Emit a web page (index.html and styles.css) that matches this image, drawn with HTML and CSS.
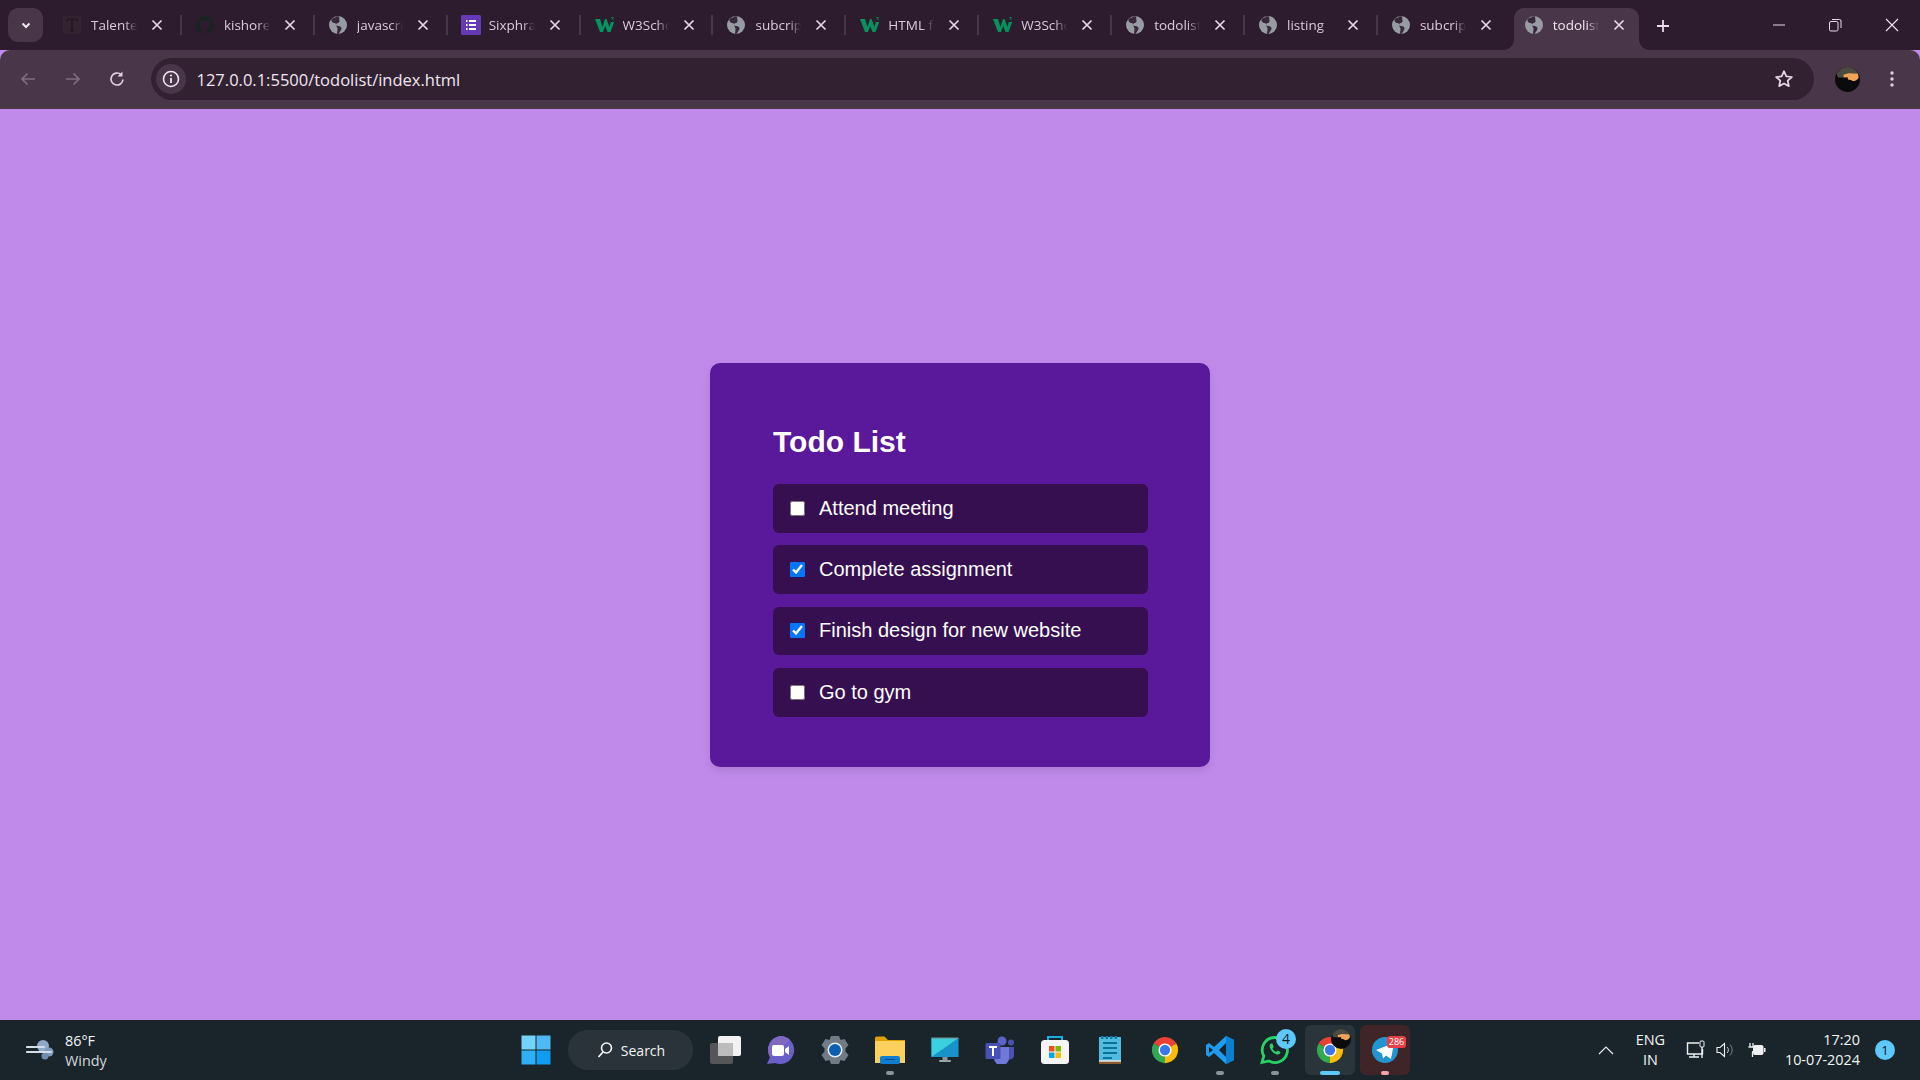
FILE: index.html
```html
<!DOCTYPE html>
<html lang="en">
<head>
<meta charset="utf-8">
<title>todolist</title>
<link rel="stylesheet" href="styles.css">
</head>
<body>
<svg class="defs" width="0" height="0" aria-hidden="true">
  <symbol id="globe" viewBox="0 0 16 16">
    <circle cx="8" cy="8" r="8" fill="#979ca3"/>
    <path d="M7 .3C5.600 1.600 3.700 2 2.200 2.600 1.800 4.500 3 6 4.800 6.300c1.300.2 1.700 1.200 1.700 2.200 0 1 .7 1.400 1 2.400.2.800-.1 2.300-.4 4.900l1.400.1c1-1.700 2.600-3.300 2.600-5 0-1.400-1.400-1.700-2.600-2-1-.2-2-.2-2.200-1.400-.1-.9 1.200-1.100 2-1.500.9-.4 1.300-1.300 1-2.100-.2-.8-.2-1.900-.3-3.400z" fill="#2d1c2e" opacity=".9"/>
  </symbol>
  <symbol id="x" viewBox="0 0 12 12">
    <path d="M1.500 1.500l9 9M10.500 1.500l-9 9" stroke="#e6d6e6" stroke-width="1.700" fill="none"/>
  </symbol>
  <symbol id="w3" viewBox="0 0 20 16">
    <path d="M0 2h5l2.500 8L10 2h1.500l3 8 1.300-5h3.400L15.500 15h-3l-2.300-6-2.200 6H5z" fill="#05925f"/>
    <path d="M16.200 .5h2.300L17 2c1 0 1.500.4 1.500 1.100" stroke="#05925f" stroke-width=".7" fill="none"/>
  </symbol>
  <symbol id="chrome" viewBox="0 0 32 32">
    <path d="M16 16L3.880 9A14 14 0 0 1 28.120 9z" fill="#ea4335"/>
    <path d="M16 16L3.880 9A14 14 0 0 0 16 30z" fill="#34a853"/>
    <path d="M16 16L28.120 9A14 14 0 0 1 16 30z" fill="#fbbc04"/>
    <circle cx="16" cy="16" r="7" fill="#fff"/>
    <circle cx="16" cy="16" r="5.500" fill="#3b78e7"/>
  </symbol>
  <symbol id="face" viewBox="0 0 24 24">
    <circle cx="12" cy="12" r="12" fill="#0c0b0b"/>
    <path d="M1.500 7C3.500 3 7 0 12 0s8.500 3 10.500 7l-1.500 3H3z" fill="#4d4b40"/>
    <path d="M8 7.500l5-1.500 9 .5.800 3.500c-1.500 2.500-3 3.500-6 3.500-1-1.500-3-1-4.300-1.500L12 9.500 8.500 10z" fill="#f2a35a"/>
  </symbol>
</svg>

<header class="chrome">
  <div class="tabstrip">
    <button class="tab-search"><svg width="12" height="12" viewBox="0 0 12 12"><path d="M2.500 4.500L6 8l3.500-3.500" stroke="#f0e6f0" stroke-width="2" fill="none"/></svg></button>
    <div class="tabs">
      <div class="tab"><svg class="fav" viewBox="0 0 16 16"><rect width="16" height="16" fill="#33222f"/><path d="M3.500 3h9v2M8 3v10M6 13h4M3.500 3v2" stroke="#241722" stroke-width="1.500" fill="none"/></svg><span class="title">Talented</span><svg class="close"><use href="#x"/></svg></div><i class="sep"></i>
      <div class="tab"><svg class="fav" viewBox="0 0 16 16"><path d="M8 0a8 8 0 0 0-2.500 15.600c.4.100.5-.2.500-.4v-1.400c-2.200.5-2.700-1-2.700-1-.4-.9-.9-1.200-.9-1.200-.7-.5.100-.5.100-.5.800.100 1.200.8 1.200.8.700 1.200 1.900.9 2.300.7.100-.5.300-.9.500-1.100-1.800-.2-3.700-.9-3.700-4 0-.9.300-1.600.8-2.100-.1-.2-.4-1 .1-2.100 0 0 .7-.2 2.200.8a7.600 7.600 0 0 1 4 0c1.500-1 2.200-.8 2.200-.8.400 1.100.2 1.900.1 2.100.5.600.8 1.300.8 2.100 0 3.100-1.900 3.800-3.700 4 .3.300.6.800.6 1.500v2.200c0 .2.100.5.600.4A8 8 0 0 0 8 0z" fill="#16261f"/></svg><span class="title">kishore</span><svg class="close"><use href="#x"/></svg></div><i class="sep"></i>
      <div class="tab"><svg class="fav"><use href="#globe"/></svg><span class="title">javascript</span><svg class="close"><use href="#x"/></svg></div><i class="sep"></i>
      <div class="tab"><svg class="fav fav-lg" viewBox="0 0 20 20"><rect width="20" height="20" rx="1.500" fill="#673ab7"/><path d="M5 6h1.500M8 6h7M5 10h1.500M8 10h7M5 14h1.500M8 14h7" stroke="#fff" stroke-width="1.800"/></svg><span class="title">Sixphrase</span><svg class="close"><use href="#x"/></svg></div><i class="sep"></i>
      <div class="tab"><svg class="fav fav-w"><use href="#w3"/></svg><span class="title">W3Schools</span><svg class="close"><use href="#x"/></svg></div><i class="sep"></i>
      <div class="tab"><svg class="fav"><use href="#globe"/></svg><span class="title">subcription</span><svg class="close"><use href="#x"/></svg></div><i class="sep"></i>
      <div class="tab"><svg class="fav fav-w"><use href="#w3"/></svg><span class="title">HTML for</span><svg class="close"><use href="#x"/></svg></div><i class="sep"></i>
      <div class="tab"><svg class="fav fav-w"><use href="#w3"/></svg><span class="title">W3Schools</span><svg class="close"><use href="#x"/></svg></div><i class="sep"></i>
      <div class="tab"><svg class="fav"><use href="#globe"/></svg><span class="title">todolist</span><svg class="close"><use href="#x"/></svg></div><i class="sep"></i>
      <div class="tab"><svg class="fav"><use href="#globe"/></svg><span class="title">listing</span><svg class="close"><use href="#x"/></svg></div><i class="sep"></i>
      <div class="tab"><svg class="fav"><use href="#globe"/></svg><span class="title">subcription</span><svg class="close"><use href="#x"/></svg></div><i class="sep sep-clear"></i>
      <div class="tab active"><svg class="fav"><use href="#globe"/></svg><span class="title">todolist</span><svg class="close"><use href="#x"/></svg></div>
    </div>
    <button class="new-tab"><svg width="16" height="16" viewBox="0 0 16 16"><path d="M8 2v12M2 8h12" stroke="#eadcea" stroke-width="1.800"/></svg></button>
    <div class="win-controls">
      <span class="win"><svg width="14" height="14" viewBox="0 0 14 14"><path d="M1 7h12" stroke="#e8dce8"/></svg></span>
      <span class="win"><svg width="14" height="14" viewBox="0 0 14 14"><rect x="1.500" y="3.500" width="8.500" height="9.500" rx="1.500" stroke="#e8dce8" fill="none"/><path d="M4 1.500h7.500a1.500 1.500 0 0 1 1.500 1.500v7" stroke="#e8dce8" fill="none"/></svg></span>
      <span class="win"><svg width="16" height="16" viewBox="0 0 16 16"><path d="M2 2l12 12M14 2L2 14" stroke="#f0e6f0" stroke-width="1.100"/></svg></span>
    </div>
  </div>
  <div class="toolbar">
    <span class="nav"><svg width="18" height="18" viewBox="0 0 18 18"><path d="M16 9H3M8.500 3.500L3 9l5.500 5.500" stroke="#7f6e7f" stroke-width="1.700" fill="none"/></svg></span>
    <span class="nav"><svg width="18" height="18" viewBox="0 0 18 18"><path d="M2 9h13M9.500 3.500L15 9l-5.500 5.500" stroke="#7f6e7f" stroke-width="1.700" fill="none"/></svg></span>
    <span class="nav"><svg width="18" height="18" viewBox="0 0 18 18"><path d="M15 9.500A6 6 0 1 1 13 4.500" stroke="#e0d0e0" stroke-width="1.700" fill="none"/><path d="M14.500 1.500v5h-5z" fill="#e0d0e0"/></svg></span>
    <div class="omnibox">
      <span class="site-info"><svg width="18" height="18" viewBox="0 0 18 18"><circle cx="9" cy="9" r="7.500" stroke="#f0e6f0" stroke-width="1.600" fill="none"/><path d="M9 8v5" stroke="#f0e6f0" stroke-width="1.800"/><circle cx="9" cy="5.500" r="1.100" fill="#f0e6f0"/></svg></span>
      <span class="url">127.0.0.1:5500/todolist/index.html</span>
      <svg class="star" width="20" height="20" viewBox="0 0 20 20"><path d="M10 2.200l2.300 5.200 5.600.6-4.200 3.700 1.200 5.500L10 14.400l-4.900 2.800 1.200-5.500L2.100 8l5.600-.6z" stroke="#e6d6e6" stroke-width="1.700" fill="none" stroke-linejoin="round"/></svg>
    </div>
    <span class="nav avatar"><svg width="25" height="25"><use href="#face"/></svg></span>
    <span class="nav"><svg width="18" height="18" viewBox="0 0 18 18"><circle cx="9" cy="3" r="1.700" fill="#e0d0e0"/><circle cx="9" cy="9" r="1.700" fill="#e0d0e0"/><circle cx="9" cy="15" r="1.700" fill="#e0d0e0"/></svg></span>
  </div>
</header>

<main class="page">
  <section class="card">
    <h1 class="card-title">Todo List</h1>
    <ul class="todo">
      <li class="item"><input type="checkbox" id="t1"><label for="t1">Attend meeting</label></li>
      <li class="item"><input type="checkbox" id="t2" checked><label for="t2">Complete assignment</label></li>
      <li class="item"><input type="checkbox" id="t3" checked><label for="t3">Finish design for new website</label></li>
      <li class="item"><input type="checkbox" id="t4"><label for="t4">Go to gym</label></li>
    </ul>
  </section>
</main>

<footer class="taskbar">
  <div class="weather">
    <svg width="32" height="26" viewBox="0 0 32 26"><circle cx="17" cy="9" r="6" fill="#8fa9c9"/><circle cx="23" cy="15" r="4.500" fill="#7f9abd"/><circle cx="19" cy="19" r="3.500" fill="#6f8cb0"/><path d="M1 10h17M1 15h24" stroke="#d4dde8" stroke-width="2.200" stroke-linecap="round"/></svg>
    <div class="weather-text"><span>86°F</span><span class="weather-sub">Windy</span></div>
  </div>
  <div class="centre">
    <span class="slot">
      <svg width="30" height="30" viewBox="0 0 30 30"><rect x="0.500" y="0.500" width="14" height="14" fill="#74d3fb"/><rect x="15.500" y="0.500" width="14" height="14" fill="#4fb9f5"/><rect x="0.500" y="15.500" width="14" height="14" fill="#2fb0f5"/><rect x="15.500" y="15.500" width="14" height="14" fill="#129bf3"/></svg>
    </span>
    <div class="search"><svg width="18" height="18" viewBox="0 0 18 18"><circle cx="10.500" cy="7" r="5" stroke="#f4f6f7" stroke-width="1.600" fill="none"/><path d="M7 11l-4.500 5" stroke="#f4f6f7" stroke-width="1.800"/></svg><span>Search</span></div>
    <div class="apps">
      <span class="slot"><svg width="32" height="30" viewBox="0 0 32 30"><rect x="9" y="1" width="23" height="20" rx="2" fill="#f2f2f2"/><rect x="1" y="8" width="23" height="21" rx="2" fill="#5d5d5d" opacity=".88"/><rect x="9" y="8" width="15" height="13" fill="#bdbdbd"/></svg></span>
      <span class="slot"><svg width="30" height="30" viewBox="0 0 30 30"><path d="M15 1a14 14 0 1 1-5 27L2 29l3-7A14 14 0 0 1 15 1z" fill="#6a5fc9"/><path d="M15 1A14 14 0 0 0 5 22l20-17A14 14 0 0 0 15 1z" fill="#8068c0"/><rect x="7" y="10" width="12" height="11" rx="2" fill="#fff"/><path d="M20 14l4-3v9l-4-3z" fill="#fff"/></svg></span>
      <span class="slot"><svg width="32" height="30" viewBox="0 0 32 30"><path d="M12 1h8l1.500 4 4-1 4 6-3 3.500v3l3 3.500-4 6-4-1L20 29h-8l-1.500-4-4 1-4-6 3-3.500v-3L2.500 10l4-6 4 1z" fill="#717b85"/><circle cx="16" cy="15" r="7.500" fill="#e8eef3"/><circle cx="16" cy="15" r="6" fill="#0f5db0"/></svg></span>
      <span class="slot slot-open"><svg width="32" height="28" viewBox="0 0 32 28"><path d="M1 2a1.500 1.500 0 0 1 1.500-1.500h8L14 4h17v8H1z" fill="#e0a100"/><path d="M1 5h30v22H1z" fill="#fcd05c"/><rect x="6" y="20" width="20" height="8" rx="2" fill="#0f7fd6"/><path d="M11 23.500h10" stroke="#064a8c"/></svg></span>
      <span class="slot"><svg width="28" height="26" viewBox="0 0 28 26"><rect x="0.500" y="1" width="27" height="19" fill="#1992c9"/><path d="M.5 1h27L.5 20z" fill="#39d0e0"/><rect x="0.500" y="0.500" width="27" height="1.200" fill="#78909c"/><rect x="11.500" y="20" width="5" height="3" fill="#8a9399"/><rect x="8" y="23" width="12" height="2" rx="1" fill="#9aa3a9"/></svg></span>
      <span class="slot"><svg width="30" height="28" viewBox="0 0 30 28"><circle cx="17" cy="5" r="4.500" fill="#5d64c8"/><circle cx="26" cy="6.500" r="3" fill="#4a51b0"/><path d="M21 11h8v9a4.500 4.500 0 0 1-8 2z" fill="#4a51b0"/><path d="M9 11h15v11a7.500 7.500 0 0 1-15 0z" fill="#7179d8"/><rect x="0.500" y="7" width="15" height="16" rx="1.500" fill="#4750b5"/><path d="M4 11h8M8 11v9" stroke="#fff" stroke-width="2"/></svg></span>
      <span class="slot"><svg width="30" height="30" viewBox="0 0 30 30"><path d="M8 6V2h14v4" stroke="#17aee6" stroke-width="2" fill="none"/><rect x="1" y="5" width="28" height="24" rx="3.500" fill="#f5f5f5"/><rect x="9" y="11" width="5.500" height="5.500" fill="#f25022"/><rect x="15.500" y="11" width="5.500" height="5.500" fill="#7fba00"/><rect x="9" y="17.500" width="5.500" height="5.500" fill="#00a4ef"/><rect x="15.500" y="17.500" width="5.500" height="5.500" fill="#ffb900"/></svg></span>
      <span class="slot"><svg width="24" height="30" viewBox="0 0 24 30"><rect x="1" y="2" width="22" height="26" fill="#51bce0"/><rect x="1" y="26" width="22" height="3" fill="#8a5a2e"/><path d="M1 26h22" stroke="#e8e8e8" stroke-width="1.500"/><path d="M3 2.500h18" stroke="#0e7ea6" stroke-width="3" stroke-dasharray="2.500 2"/><path d="M5 8h14M5 13h14M5 18h14M5 23h9" stroke="#0e6f99" stroke-width="2"/></svg></span>
      <span class="slot"><svg width="30" height="30"><use href="#chrome"/></svg></span>
      <span class="slot slot-open"><svg width="30" height="30" viewBox="0 0 30 30"><path d="M21 1l8 4v20l-8 4L9 18l-5 4-3-2v-10l3-2 5 4z" fill="#1f9cf0"/><path d="M21 1l8 4v20l-8 4z" fill="#0b7fcf"/><path d="M21 8l-7 7 7 7z" fill="#1a252b"/><path d="M4 12l4 3-4 3z" fill="#1a252b"/></svg></span>
      <span class="slot slot-open"><svg width="30" height="30" viewBox="0 0 30 30"><path d="M15 2.500a12.500 12.500 0 1 1-6 23.500L2 27.500l1.800-6.500A12.500 12.500 0 0 1 15 2.500z" stroke="#25d366" stroke-width="2.800" fill="none"/><path d="M11 8.500c-1.500 1-2 3-.5 5.500 1.500 3 4 5 6.500 5.500 2 .3 3.500-1 3.500-2.500l-3-1.500-1.500 1.500c-1.500-.8-3-2.300-3.500-3.500l1.200-1.500-1.300-3.500z" fill="#25d366"/></svg><b class="count count-blue">4</b></span>
      <span class="slot slot-active"><svg width="30" height="30"><use href="#chrome"/></svg><svg class="overlay-face" width="20" height="20"><use href="#face"/></svg></span>
      <span class="slot slot-alert"><svg width="28" height="28" viewBox="0 0 28 28"><circle cx="14" cy="14" r="13" fill="#2095cf"/><path d="M5 14l18-7-3 16-5-3.500-3 3-1-5z" fill="#fff"/></svg><b class="count count-red">286</b></span>
    </div>
  </div>
  <div class="tray">
    <svg class="tray-chev" width="16" height="10" viewBox="0 0 16 10"><path d="M1 9l7-7 7 7" stroke="#e8eaec" stroke-width="1.200" fill="none"/></svg>
    <div class="lang"><span>ENG</span><span>IN</span></div>
    <svg class="tray-i" width="20" height="20" viewBox="0 0 20 20"><path d="M13 3H1.500v11h15V9M3 17h10M8 14v3" stroke="#eef0f2" stroke-width="1.400" fill="none"/><rect x="14" y="1" width="4" height="6" rx="1" stroke="#eef0f2" fill="#1a252b"/><path d="M16 7v11" stroke="#eef0f2" stroke-width="1.400"/></svg>
    <svg class="tray-i" width="20" height="18" viewBox="0 0 20 18"><path d="M1 6.500v5h3l4.500 4V2.500L4 6.500z" stroke="#eef0f2" stroke-width="1.100" fill="none"/><path d="M11 6a4 4 0 0 1 0 6" stroke="#c8cbce" fill="none"/><path d="M14 3.500a8 8 0 0 1 0 11" stroke="#777c80" fill="none"/></svg>
    <svg class="tray-i" width="20" height="16" viewBox="0 0 20 16"><path d="M4 1v4M7 1v4M2.500 5h6v3l-2 2v5" stroke="#eef0f2" stroke-width="1.300" fill="none"/><rect x="7" y="3" width="10.500" height="10" rx="2" fill="#eef0f2"/><rect x="18" y="6" width="1.500" height="4" fill="#eef0f2"/></svg>
    <div class="clock"><span>17:20</span><span>10-07-2024</span></div>
    <b class="notif">1</b>
  </div>
</footer>
</body>
</html>
```
FILE: styles.css
```css
* { box-sizing: border-box; }
html, body { margin: 0; height: 100%; }
body {
  display: flex;
  flex-direction: column;
  height: 1080px;
  overflow: hidden;
  font-family: "Liberation Sans", Arial, sans-serif;
  background: #c08aeb;
}
.defs { position: absolute; }
button { border: 0; padding: 0; background: none; font: inherit; }

/* browser chrome */
.chrome { flex: none; font-family: "Open Sans", "Noto Sans", sans-serif; }
.tabstrip {
  height: 50px;
  display: flex;
  align-items: flex-start;
  background: #2d1c2e;
}
.tab-search {
  width: 35px;
  height: 34px;
  margin: 8px 6px 0 8px;
  border-radius: 10px;
  background: #4a3649;
  display: flex;
  align-items: center;
  justify-content: center;
  flex: none;
}
.tabs { display: flex; align-items: flex-start; margin-top: 8px; flex: none; }
.tab {
  width: 130.900px;
  height: 42px;
  padding: 0 0 8px 14px;
  display: flex;
  align-items: center;
  color: #dccbdc;
  font-size: 13.500px;
  flex: none;
}
.fav { width: 18px; height: 18px; flex: none; margin-right: 10px; }
.fav-lg { width: 20px; height: 20px; margin: 0 8px 0 -1px; }
.fav-w { width: 20px; height: 16px; margin: 0 8px 0 0; }
.title {
  width: 48px;
  margin-right: 12px;
  overflow: hidden;
  white-space: nowrap;
  flex: none;
  -webkit-mask-image: linear-gradient(90deg, #000 70%, transparent 96%);
  mask-image: linear-gradient(90deg, #000 70%, transparent 96%);
}
.close { width: 12px; height: 12px; flex: none; }
.sep { width: 2px; height: 20px; margin-top: 7px; background: #4a3649; flex: none; }
.sep-clear { background: transparent; }
.tab.active {
  position: relative;
  width: 124.500px;
  margin-left: 3.500px;
  padding-left: 10.500px;
  background: #4a3649;
  color: #f1e6f1;
  border-radius: 10px 10px 0 0;
}
.tab.active::before, .tab.active::after {
  content: "";
  position: absolute;
  bottom: 0;
  width: 10px;
  height: 10px;
}
.tab.active::before {
  left: -10px;
  background: radial-gradient(circle at 0 0, transparent 9.500px, #4a3649 10px);
}
.tab.active::after {
  right: -10px;
  background: radial-gradient(circle at 100% 0, transparent 9.500px, #4a3649 10px);
}
.new-tab {
  width: 16px;
  height: 16px;
  margin: 17px 0 0 16px;
  flex: none;
}
.win-controls { margin-left: auto; height: 50px; display: flex; align-items: center; flex: none; }
.win { width: 56.500px; display: flex; justify-content: center; }

.toolbar {
  height: 59px;
  padding: 8px 6px 9px;
  display: flex;
  align-items: center;
  background: #4a3649;
  border-radius: 10px 10px 0 0;
}
.nav { width: 44.500px; display: flex; justify-content: center; align-items: center; flex: none; }
.omnibox {
  flex: 1;
  height: 42px;
  margin: 0 11px 0 11px;
  padding: 0 20px 0 5px;
  display: flex;
  align-items: center;
  border-radius: 21px;
  background: #322231;
}
.site-info {
  width: 30px;
  height: 30px;
  border-radius: 50%;
  background: #4a3649;
  display: flex;
  align-items: center;
  justify-content: center;
  flex: none;
}
.url { margin-left: 11px; color: #f1e6f1; font-size: 16.500px; white-space: nowrap; }
.star { margin-left: auto; flex: none; }

/* page */
.page {
  flex: 1;
  display: flex;
  align-items: center;
  justify-content: center;
  background: #c08aeb;
}
.card {
  width: 500px;
  height: 404px;
  padding: 61.500px 62px 50px 63px;
  background: #5a189a;
  border-radius: 10px;
  box-shadow: 0 4px 8px rgba(0, 0, 0, .1);
}
.card-title {
  margin: 0 0 24px;
  font-size: 30px;
  line-height: 36px;
  font-weight: 700;
  color: #fff;
}
.todo {
  margin: 0;
  padding: 0;
  list-style: none;
  display: flex;
  flex-direction: column;
  gap: 12.500px;
}
.item {
  height: 48.750px;
  padding: 0 17px;
  display: flex;
  align-items: center;
  gap: 14px;
  background: #360f50;
  border-radius: 6px;
  color: #fff;
  font-size: 20px;
}
.item input { width: 15px; height: 15px; margin: 0; flex: none; }

/* taskbar */
.taskbar {
  flex: none;
  height: 60px;
  display: flex;
  align-items: center;
  background: #1a252b;
  color: #f2f4f5;
  font-family: "Open Sans", "Noto Sans", sans-serif;
  font-size: 14.400px;
}
.weather {
  width: 508px;
  padding-left: 24px;
  display: flex;
  align-items: center;
  gap: 9px;
  flex: none;
}
.weather svg { margin-left: 2px; margin-right: -2px; }
.weather-text { display: flex; flex-direction: column; line-height: 20px; padding-top: 1px; }
.weather-sub { color: #d5d8da; }
.centre { display: flex; align-items: center; flex: none; }
.slot {
  position: relative;
  width: 55px;
  height: 50px;
  display: flex;
  align-items: center;
  justify-content: center;
  flex: none;
}
.search {
  width: 125px;
  height: 40px;
  margin: 0 4.500px 0 5px;
  border-radius: 20px;
  background: #2a3339;
  display: flex;
  align-items: center;
  justify-content: center;
  gap: 7px;
  font-size: 14px;
}
.apps { display: flex; align-items: center; }
.slot-open::after, .slot-active::after, .slot-alert::after {
  content: "";
  position: absolute;
  bottom: 0;
  left: 50%;
  width: 8px;
  height: 4px;
  margin-left: -4px;
  border-radius: 2px;
  background: #8d9295;
}
.slot-active::before, .slot-alert::before {
  content: "";
  position: absolute;
  inset: 0 2.500px;
  border-radius: 6px;
  background: #2a353b;
}
.slot-alert::before { background: #3f2528; }
.slot > svg { position: relative; }
.slot-active::after { width: 20px; margin-left: -10px; background: #5ec8fb; }
.slot-alert::after { background: #f4a3ae; }
.slot > .overlay-face { position: absolute; top: 4px; right: 6.500px; }
.count {
  position: absolute;
  font-weight: 400;
  text-align: center;
}
.count-blue {
  top: 4px;
  right: 6.500px;
  width: 20px;
  height: 20px;
  border-radius: 50%;
  background: #5ec8fb;
  color: #10181c;
  font-size: 14px;
  line-height: 20px;
}
.count-red {
  top: 11px;
  right: 6.500px;
  width: 19px;
  height: 12px;
  border-radius: 3px;
  background: #ea3e48;
  color: #fff;
  font-size: 9px;
  line-height: 12px;
}
.tray { margin-left: auto; padding-right: 25px; display: flex; align-items: center; flex: none; }
.tray-chev { margin-right: 18px; }
.lang { width: 36px; display: flex; flex-direction: column; align-items: center; line-height: 20px; margin-right: 18px; }
.tray-i { margin-right: 10px; flex: none; }
.clock { margin-left: 8.500px; display: flex; flex-direction: column; align-items: flex-end; line-height: 20px; }
.notif {
  width: 20px;
  height: 20px;
  margin-left: 15px;
  border-radius: 50%;
  background: #5ec8fb;
  color: #10181c;
  font-size: 13px;
  font-weight: 400;
  line-height: 20px;
  text-align: center;
}
```
